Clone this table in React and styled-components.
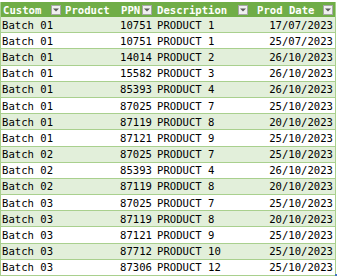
import styled, { createGlobalStyle } from 'styled-components';

const rows = [
    ['Batch 01', '10751', 'PRODUCT 1', '17/07/2023'],
    ['Batch 01', '10751', 'PRODUCT 1', '25/07/2023'],
    ['Batch 01', '14014', 'PRODUCT 2', '26/10/2023'],
    ['Batch 01', '15582', 'PRODUCT 3', '26/10/2023'],
    ['Batch 01', '85393', 'PRODUCT 4', '26/10/2023'],
    ['Batch 01', '87025', 'PRODUCT 7', '25/10/2023'],
    ['Batch 01', '87119', 'PRODUCT 8', '20/10/2023'],
    ['Batch 01', '87121', 'PRODUCT 9', '25/10/2023'],
    ['Batch 02', '87025', 'PRODUCT 7', '25/10/2023'],
    ['Batch 02', '85393', 'PRODUCT 4', '26/10/2023'],
    ['Batch 02', '87119', 'PRODUCT 8', '20/10/2023'],
    ['Batch 03', '87025', 'PRODUCT 7', '25/10/2023'],
    ['Batch 03', '87119', 'PRODUCT 8', '20/10/2023'],
    ['Batch 03', '87121', 'PRODUCT 9', '25/10/2023'],
    ['Batch 03', '87712', 'PRODUCT 10', '25/10/2023'],
    ['Batch 03', '87306', 'PRODUCT 12', '25/10/2023'],
];

const GlobalStyle = createGlobalStyle`
    body {
        margin: 0;
        background: #ffffff;
        font-family: 'DejaVu Sans Mono', 'Liberation Mono', monospace;
    }
`;

const App = () => {
    return (
        <>
            <GlobalStyle />
            <Sheet>
                <Table>
                    <HeaderRow>
                        <HeadCell>
                            Custom <Filter />
                        </HeadCell>
                        <HeadCell>Product</HeadCell>
                        <HeadCell $indent='1px'>
                            PPN <Filter />
                        </HeadCell>
                        <HeadCell $indent='3px'>
                            Description <Filter />
                        </HeadCell>
                        <HeadCell $indent='7px'>
                            Prod Date <Filter />
                        </HeadCell>
                    </HeaderRow>
                    {rows.map((r, i) => (
                        <Row key={i} $band={i % 2 === 0}>
                            <Cell>{r[0]}</Cell>
                            <Cell />
                            <Cell $right>{r[1]}</Cell>
                            <Cell $pad>{r[2]}</Cell>
                            <Cell $right>{r[3]}</Cell>
                        </Row>
                    ))}
                    <Handle />
                </Table>
            </Sheet>
        </>
    );
};

// little filter arrow button in header cells
const Filter = () => (
    <FilterBox>
        <svg width='6' height='4' viewBox='0 0 6 4'>
            <path d='M0 0.5 L6 0.5 L3 3.5 Z' fill='#595959' />
        </svg>
    </FilterBox>
);

export default App;

const Sheet = styled.div`
    padding-top: 2px;
    width: 343px;
    height: 278px;
    box-sizing: border-box;
`;

const Table = styled.div`
    position: relative;
    width: 336px;
    border-left: 1px solid #a9d08e;
    border-right: 1px solid #a9d08e;
    box-sizing: border-box;
`;

const cols = '62px 57px 34px 96px 85px';

const HeaderRow = styled.div`
    display: grid;
    grid-template-columns: ${cols};
    height: 15px;
    background: #70ad47;
    color: #ffffff;
    font-weight: bold;
`;

const HeadCell = styled.div`
    display: flex;
    align-items: center;
    justify-content: space-between;
    padding: 0 2px 0 ${(p) => p.$indent || '2px'};
    font-size: 10.6px;
    white-space: nowrap;
    overflow: hidden;
`;

const FilterBox = styled.span`
    display: flex;
    align-items: center;
    justify-content: center;
    width: 10px;
    height: 10px;
    box-sizing: border-box;
    background: #f0f0f0;
    border: 1px solid #a6a6a6;
    flex-shrink: 0;
`;

const Row = styled.div`
    display: grid;
    grid-template-columns: ${cols};
    height: 16.2px;
    box-sizing: border-box;
    border-bottom: 1px solid #a9d08e;
    background: ${(p) => (p.$band ? '#e2efda' : '#ffffff')};
    color: #000000;
`;

const Cell = styled.div`
    display: flex;
    align-items: center;
    justify-content: ${(p) => (p.$right ? 'flex-end' : 'flex-start')};
    padding: 0 2px 0 ${(p) => (p.$pad ? '3px' : '1px')};
    font-size: 10.6px;
    white-space: nowrap;
    overflow: hidden;
`;

const Handle = styled.span`
    position: absolute;
    right: -2px;
    bottom: 0;
    width: 2px;
    height: 2px;
    background: #4472c4;
`;
